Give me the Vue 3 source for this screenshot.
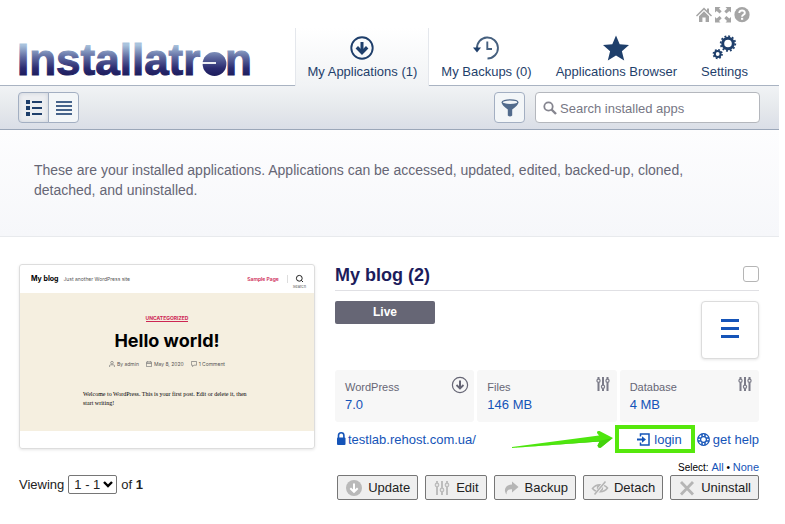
<template>
  <div class="page">
    <header class="header">
      <h1 class="logo" aria-label="Installatron">
        <svg width="248" height="56" viewBox="-6 0 248 56">
          <defs>
            <linearGradient id="ink" gradientUnits="userSpaceOnUse" x1="0" y1="12" x2="0" y2="43">
              <stop offset="0" stop-color="#a9c3dd" />
              <stop offset=".4" stop-color="#5e699f" />
              <stop offset=".75" stop-color="#2b2b70" />
              <stop offset="1" stop-color="#1c1c5c" />
            </linearGradient>
          </defs>
          <text x="-2" y="42">Installatr</text>
          <circle cx="195.500" cy="31" r="11.900" fill="url(#ink)" />
          <path d="M183 30h14" stroke="#fff" stroke-width="1.800" />
          <text x="206" y="42">n</text>
        </svg>
      </h1>

      <div class="header-right">
        <div class="top-links">
          <a href="#" aria-label="Home">
            <svg width="16" height="16" viewBox="0 0 16 16" fill="#a5a5a5">
              <path d="M8 0.500 11 3.500V1.500h2v4L16 8.600l-1 1L8 2.800 1 9.600 0 8.600z" />
              <path d="M8 4.300 13 9.200V15H9.600v-4.500H6.400V15H3V9.200z" />
            </svg>
          </a>
          <a href="#" aria-label="Fullscreen">
            <svg width="16" height="16" viewBox="0 0 16 16" fill="#a5a5a5">
              <path d="M0 0h5.500L4 1.700 6.700 4.300 4.600 6.500 1.700 4 0 5.500z" />
              <path d="M16 0v5.500L14.300 4l-2.900 2.500L9.300 4.300 12 1.700 10.500 0z" />
              <path d="M0 15.500V10l1.700 1.600 2.900-2.500L6.700 11.300 4 13.900l1.500 1.600z" />
              <path d="M16 15.500h-5.500L12 13.900 9.300 11.300l2.100-2.200 2.900 2.500L16 10z" />
            </svg>
          </a>
          <a href="#" aria-label="Help">
            <svg width="16" height="16" viewBox="0 0 16 16">
              <circle cx="8" cy="7.700" r="7.600" fill="#a5a5a5" />
              <path d="M5.300 5.900c0-3.400 5.600-3.300 5.500 0 0 1.900-2.700 1.900-2.700 3.800" fill="none" stroke="#fff" stroke-width="2" />
              <rect x="7" y="10.800" width="2.200" height="2" fill="#fff" />
            </svg>
          </a>
        </div>

        <nav class="tabs">
          <a v-for="tab in tabs" :key="tab.id" href="#" class="tab"
            :class="{ active: tab.id === activeTab }"
            @click.prevent="activeTab = tab.id">
            <svg v-if="tab.id === 'apps'" width="26" height="26" viewBox="0 0 26 26" fill="none" stroke="#1f3f6b">
              <circle cx="13" cy="13" r="10.700" stroke-width="1.900" />
              <path d="M13 7v10" stroke-width="3" />
              <path d="M7.800 12.300 13 17.500l5.200-5.200" stroke-width="3.400" />
            </svg>
            <svg v-if="tab.id === 'backups'" width="28" height="26" viewBox="0 0 28 26" fill="none" stroke="#46607f">
              <path d="M5 14A10.500 10.500 0 1 1 15.500 23.500" stroke-width="1.900" />
              <path d="M15.300 6.500V14H20" stroke-width="1.900" />
              <path d="M1 12.500h8L5 17.500z" fill="#1f3f6b" stroke="none" />
            </svg>
            <svg v-if="tab.id === 'browser'" width="28" height="26" viewBox="0 0 28 26">
              <path d="M14 0.500 17.700 9.300 27 10l-7.100 6.300L22.200 25.500 14 20.500 5.800 25.500 8.100 16.300 1 10l9.300-.7z" fill="#1f3f6b" />
            </svg>
            <svg v-if="tab.id === 'settings'" width="26" height="26" viewBox="0 0 26 26" fill="none" stroke="#1f3f6b">
              <circle cx="16" cy="8.500" r="5.300" stroke-width="3" />
              <circle cx="16" cy="8.500" r="7.300" stroke-width="1.800" stroke-dasharray="1.900 1.922" />
              <circle cx="5.700" cy="19" r="2.900" stroke-width="2" />
              <circle cx="5.700" cy="19" r="4.300" stroke-width="1.700" stroke-dasharray="1.700 1.677" />
            </svg>
            <span>{{ tab.label }}</span>
          </a>
        </nav>
      </div>
    </header>

    <div class="toolbar">
      <div class="view-switch">
        <button type="button" class="pressed" aria-label="Detailed list">
          <svg width="18" height="18" viewBox="0 0 18 18" fill="#1f3f6b">
            <path d="M1 1h4v4H1zM1 7h4v4H1zM1 13h4v4H1zM7 2h10v2H7zM7 8h10v2H7zM7 14h10v2H7z" />
          </svg>
        </button>
        <button type="button" aria-label="Compact list">
          <svg width="18" height="18" viewBox="0 0 18 18" fill="#46638a">
            <path d="M1 2h16v2H1zM1 6h16v2H1zM1 10h16v2H1zM1 14h16v2H1z" />
          </svg>
        </button>
      </div>

      <div class="search-group">
        <button type="button" class="filter" aria-label="Filter">
          <svg width="18" height="18" viewBox="0 0 18 18">
            <path d="M0.500 3.500Q1 6.500 6.800 10.500V16.500Q9 18.500 11.200 16.500V10.500Q17 6.500 17.500 3.500z" fill="#526b8c" />
            <ellipse cx="9" cy="3.200" rx="7.900" ry="2.300" fill="#f2f5f8" stroke="#526b8c" stroke-width="1.200" />
          </svg>
        </button>
        <label class="search">
          <svg width="14" height="14" viewBox="0 0 14 14" fill="none" stroke="#85858f">
            <circle cx="5.500" cy="5.500" r="4.200" stroke-width="1.800" />
            <path d="M8.500 8.500 13 13" stroke-width="2.400" />
          </svg>
          <input v-model="search" type="text" placeholder="Search installed apps" aria-label="Search installed apps" />
        </label>
      </div>
    </div>

    <p class="intro">
      These are your installed applications. Applications can be accessed, updated, edited, backed-up, cloned, detached, and uninstalled.
    </p>

    <main class="content">
      <div class="app">
        <!-- site preview -->
        <div class="preview">
          <div class="site-head">
            <b>My blog</b>
            <span class="tagline">Just another WordPress site</span>
            <span class="sample">Sample Page</span>
            <span class="site-search">
              <svg width="9" height="9" viewBox="0 0 9 9" fill="none" stroke="#222">
                <circle cx="4.300" cy="4.300" r="2.900" />
                <path d="M6.300 6.300 8 8" />
              </svg>
              Search
            </span>
          </div>
          <div class="site-body">
            <span class="category">UNCATEGORIZED</span>
            <h2>Hello world!</h2>
            <div class="meta">
              <span>
                <svg width="6" height="6" viewBox="0 0 6 6" fill="none" stroke="#777" stroke-width=".7">
                  <circle cx="3" cy="1.700" r="1.300" />
                  <path d="M.6 6V4.500Q.6 3.800 1.500 3.800h3Q5.400 3.800 5.400 4.500V6" />
                </svg>
                By admin
              </span>
              <span>
                <svg width="6" height="6" viewBox="0 0 6 6" fill="none" stroke="#777" stroke-width=".7">
                  <path d="M.4 1h5.200v4.600H.4zM.4 2.500h5.200M1.700 0v1.500M4.300 0v1.500" />
                </svg>
                May 8, 2020
              </span>
              <span>
                <svg width="6" height="6" viewBox="0 0 6 6" fill="none" stroke="#777" stroke-width=".7">
                  <path d="M.4.5h5.200v3.700H3L1.500 5.600V4.200H.4z" />
                </svg>
                1 Comment
              </span>
            </div>
            <p>Welcome to WordPress. This is your first post. Edit or delete it, then start writing!</p>
          </div>
        </div>

        <div class="details">
          <div class="title-row">
            <h2>My blog (2)</h2>
            <input v-model="selected" type="checkbox" aria-label="Select My blog (2)" />
          </div>

          <div class="status-row">
            <span class="badge">Live</span>
            <button type="button" class="menu" aria-label="Menu">
              <svg width="18" height="20" viewBox="0 0 18 20" fill="#1554b8">
                <path d="M0 1h18v3H0zM0 9h18v3H0zM0 17h18v3H0z" />
              </svg>
            </button>
          </div>

          <div class="stats">
            <div v-for="stat in stats" :key="stat.label" class="stat">
              <div>
                <div class="stat-label">{{ stat.label }}</div>
                <a href="#">{{ stat.value }}</a>
              </div>
              <svg v-if="stat.icon === 'down'" width="18" height="18" viewBox="0 0 18 18" fill="none" stroke="#666675">
                <circle cx="9" cy="9" r="7.600" stroke-width="1.200" />
                <path d="M9 4.500v8" stroke-width="2" />
                <path d="M5.500 9 9 12.500 12.500 9" stroke-width="1.800" />
              </svg>
              <svg v-else width="16" height="16" viewBox="0 0 16 16" fill="none" stroke="#7b7b88">
                <path d="M2.500 1v2M2.500 6.500V15M7 1v8M7 12.500V15M11.500 1v2M11.500 6.500V15" stroke-width="2" />
                <circle cx="2.500" cy="4.700" r="1.600" stroke-width="1.200" />
                <circle cx="7" cy="10.800" r="1.600" stroke-width="1.200" />
                <circle cx="11.500" cy="4.700" r="1.600" stroke-width="1.200" />
              </svg>
            </div>
          </div>

          <div class="links">
            <a href="#" class="site-link">
              <svg width="12" height="14" viewBox="0 0 12 14">
                <path d="M3.500 7V3.500a2.700 2.700 0 0 1 5.400 0V7" fill="none" stroke="#1554b8" stroke-width="1.600" />
                <rect x="2" y="5.500" width="8.500" height="7.500" rx="1" fill="#1554b8" />
              </svg>
              <span>testlab.rehost.com.ua/</span>
            </a>
            <svg class="arrow" width="102" height="20" viewBox="0 0 102 20">
              <path d="M1 18 88 6.500 86 4Q85.500 1.500 88.500 2L102 9 90 18.500Q87 19.500 86.500 16.500L88.500 12.500 1 19z" fill="#4ee60e" />
              <path d="M3 18.800 89 11.800 101 9.200 90 18.500Q87 19.500 86.500 16.500L88.500 12.500z" fill="#43d20c" />
            </svg>
            <a href="#" class="login">
              <svg width="13" height="13" viewBox="0 0 13 13" fill="none" stroke="#1554b8">
                <path d="M3.500 3.500V1H12v11H3.500V9.500" stroke-width="1.500" />
                <path d="M0 6.500h6" stroke-width="2" />
                <path d="M5 3.300 9 6.500 5 9.700z" fill="#1554b8" stroke="none" />
              </svg>
              <span>login</span>
            </a>
            <a href="#" class="help">
              <svg width="13" height="13" viewBox="0 0 13 13" fill="none" stroke="#1554b8">
                <circle cx="6.500" cy="6.500" r="5.800" stroke-width="1.200" />
                <circle cx="6.500" cy="6.500" r="2.900" stroke-width="1.200" />
                <path d="M5 .8v3M8 .8v3M5 9.200v3M8 9.200v3M.8 5h3M.8 8h3M9.200 5h3M9.200 8h3" stroke-width="1.500" />
              </svg>
              <span>get help</span>
            </a>
          </div>
        </div>
      </div>

      <div class="footer">
        <div class="paging">
          <label for="range">Viewing</label>
          <span class="range">
            <select id="range"><option>1 - 1</option></select>
            <svg width="10" height="7" viewBox="0 0 10 7" fill="none" stroke="#000" stroke-width="2.400">
              <path d="M1 1 5 5 9 1" />
            </svg>
          </span>
          <span>of <b>1</b></span>
        </div>

        <div class="bulk">
          <div class="select-links">Select: <a href="#" @click.prevent="selected = true">All</a> • <a href="#" @click.prevent="selected = false">None</a></div>
          <div class="actions">
            <button type="button">
              <svg width="18" height="18" viewBox="0 0 18 18">
                <circle cx="9" cy="9" r="8" fill="#b9b9b9" />
                <path d="M9 4.500v8M5.300 9.200 9 12.800l3.700-3.600" fill="none" stroke="#fff" stroke-width="2" />
              </svg>
              Update
            </button>
            <button type="button">
              <svg width="18" height="18" viewBox="0 0 18 18" fill="none" stroke="#bdbdbd">
                <path d="M4 2v2M4 8v8M9 2v7M9 13v3M14 2v2M14 8v8" stroke-width="2" />
                <circle cx="4" cy="6" r="1.700" stroke-width="1.400" />
                <circle cx="9" cy="11" r="1.700" stroke-width="1.400" />
                <circle cx="14" cy="6" r="1.700" stroke-width="1.400" />
              </svg>
              Edit
            </button>
            <button type="button">
              <svg width="18" height="18" viewBox="0 0 18 18" fill="#b5b5b5">
                <path d="M10 2.500 16.500 8l-6.500 5.500V10.300C6.500 10 4.500 11.500 4.500 15.500 1 11 3.500 5.500 10 5.500z" />
              </svg>
              Backup
            </button>
            <button type="button">
              <svg width="18" height="18" viewBox="0 0 18 18" fill="none" stroke="#b5b5b5" stroke-width="1.600">
                <path d="M1.500 9.500C5 4.500 13 4.500 16.500 9 13 14 5 14 1.500 9.500z" />
                <circle cx="9" cy="9" r="2.400" />
                <path d="M4 16 14 2.500" stroke="#efefef" stroke-width="3" />
                <path d="M3.500 15.500 14.500 2.500" />
              </svg>
              Detach
            </button>
            <button type="button">
              <svg width="18" height="18" viewBox="0 0 18 18" fill="none" stroke="#b5b5b5" stroke-width="2.800">
                <path d="M3 3 15 15.500M15 3 3 15.500" />
              </svg>
              Uninstall
            </button>
          </div>
        </div>
      </div>
    </main>
  </div>
</template>

<script setup>
  import { ref } from 'vue';

  const activeTab = ref('apps')
  const search = ref('')
  const selected = ref(false)

  const tabs = [
    { id: 'apps', label: 'My Applications (1)' },
    { id: 'backups', label: 'My Backups (0)' },
    { id: 'browser', label: 'Applications Browser' },
    { id: 'settings', label: 'Settings' }
  ]

  const stats = [
    { label: 'WordPress', value: '7.0', icon: 'down' },
    { label: 'Files', value: '146 MB', icon: 'sliders' },
    { label: 'Database', value: '4 MB', icon: 'sliders' }
  ]
</script>

<style>
body {
    background: #fff;
}
</style>

<style scoped>
.page {
    margin-right: 6px;
    font-family: "Liberation Sans", Arial, sans-serif;
    font-size: 13px;
    line-height: 16px;
    color: #222;
}

.page * {
    box-sizing: border-box;
}

a {
    color: #1554b8;
    text-decoration: none;
}

svg {
    display: block;
    flex: none;
}

button,
input,
select {
    font: inherit;
}

h1,
h2,
p {
    margin: 0;
}

/* header */
.header {
    display: flex;
    justify-content: space-between;
    align-items: flex-end;
    padding: 0 19px 0 13px;
    border-bottom: 1px solid #a9b3c2;
}

.logo {
    margin-bottom: -4px;
}

.logo text {
    font-size: 44px;
    font-weight: bold;
    fill: url(#ink);
    stroke: url(#ink);
    stroke-width: 1px;
}

.top-links {
    display: flex;
    justify-content: flex-end;
    gap: 3px;
    padding: 7px 10px 5px 0;
}

.tabs {
    display: flex;
}

.tab {
    display: flex;
    flex-direction: column;
    align-items: center;
    gap: 3px;
    height: 57px;
    padding: 7px 12px 0;
    color: #1f3f6b;
}

.tab.active {
    height: 58px;
    margin-bottom: -1px;
    padding: 7px 11px 0;
    border: solid #e4e7ec;
    border-width: 0 1px;
    background: linear-gradient(#fff, #f1f3f5);
}

/* toolbar */
.toolbar {
    display: flex;
    justify-content: space-between;
    padding: 6px 19px;
    background: linear-gradient(#f1f3f5, #e5e8ec 55%, #dadee7);
    border-bottom: 1px solid #9ba7b9;
}

.view-switch {
    display: flex;
    margin-left: -1px;
}

.toolbar button {
    display: flex;
    align-items: center;
    justify-content: center;
    width: 31px;
    height: 31px;
    padding: 0;
    border: 1px solid #a3afc2;
    border-radius: 4px;
    background: #f3f6f8;
}

.view-switch button:first-child {
    border-radius: 4px 0 0 4px;
}

.view-switch button:last-child {
    margin-left: -1px;
    border-radius: 0 4px 4px 0;
}

.toolbar .pressed {
    background: #eceef1;
    box-shadow: inset 0 0 4px #ccd1da;
}

.search-group {
    display: flex;
    gap: 10px;
}

.search {
    display: flex;
    align-items: center;
    gap: 3px;
    width: 225px;
    height: 31px;
    padding: 0 7px;
    border: 1px solid #b4b7bd;
    border-radius: 4px;
    background: #fff;
}

.search input {
    flex: 1;
    min-width: 0;
    padding: 2px 0 0;
    border: 0;
    outline: 0;
    background: none;
}

.search input::placeholder {
    color: #777785;
}

.intro {
    padding: 30px 80px 36px 34px;
    background: linear-gradient(#fdfdfe, #f6f7fa);
    border-bottom: 1px solid #e8eaed;
    font-size: 14px;
    line-height: 20px;
    color: #666675;
}

/* application */
.content {
    padding: 27px 20px 0 19px;
}

.app {
    display: grid;
    grid-template-columns: 296px 1fr;
    gap: 20px;
    align-items: start;
}

.preview {
    padding-bottom: 17px;
    border: 1px solid #ddd;
    border-radius: 3px;
    box-shadow: 0 1px 3px #e6e6e6;
    font-family: Inter, sans-serif;
    font-size: 5px;
    line-height: 8px;
    color: #555;
}

.site-head {
    display: flex;
    align-items: center;
    height: 28px;
    padding: 0 8px 0 11px;
}

.site-head b {
    font-size: 7px;
    color: #000;
}

.tagline {
    margin-left: 5px;
}

.sample {
    margin-left: auto;
    padding-right: 8px;
    border-right: 1px solid #ddd;
    font-weight: 600;
    color: #cd2653;
}

.site-search {
    display: flex;
    flex-direction: column;
    align-items: center;
    margin-left: 5px;
    padding-top: 5px;
    font-size: 4px;
    line-height: 4px;
    gap: 2px;
}

.site-body {
    display: flex;
    flex-direction: column;
    align-items: center;
    height: 138px;
    padding-top: 22px;
    background: #f5efe0;
}

.category {
    border-bottom: 1px solid #cd2653;
    font-weight: 700;
    line-height: 6px;
    color: #cd2653;
}

.site-body h2 {
    margin-top: 7px;
    font-size: 18px;
    line-height: 24px;
    color: #000;
}

.meta {
    display: flex;
    gap: 7px;
    margin-top: 7px;
}

.meta span {
    display: flex;
    align-items: center;
    gap: 2px;
}

.site-body p {
    width: 168px;
    margin-top: 22px;
    font-family: "Liberation Serif", serif;
    font-size: 6px;
    line-height: 9px;
    color: #000;
}

.title-row {
    display: flex;
    justify-content: space-between;
    align-items: flex-start;
    height: 27px;
    border-bottom: 1px solid #e0e0e4;
}

.title-row h2 {
    font-size: 18px;
    line-height: 22px;
    color: #1c1c5c;
}

.title-row input {
    appearance: none;
    width: 16px;
    height: 16px;
    margin: 2px 0 0;
    border: 1px solid #b5b5b5;
    border-radius: 3px;
    background: #fff;
}

.title-row input:checked {
    background: #1554b8;
}

.status-row {
    display: flex;
    justify-content: space-between;
    align-items: flex-start;
    margin-top: 10px;
}

.badge {
    width: 100px;
    border-radius: 2px;
    background: #666675;
    color: #fff;
    font-size: 12px;
    font-weight: bold;
    line-height: 23px;
    text-align: center;
}

.menu {
    display: flex;
    align-items: center;
    justify-content: center;
    width: 58px;
    height: 58px;
    padding: 0 0 4px;
    border: 1px solid #dcdcdc;
    border-radius: 4px;
    background: #fff;
    box-shadow: 0 1px 3px #e6e6e6;
}

.stats {
    display: grid;
    grid-template-columns: repeat(3, 1fr);
    gap: 3px;
    margin-top: 11px;
}

.stat {
    display: flex;
    justify-content: space-between;
    align-items: flex-start;
    height: 52px;
    padding: 6px 5px 0 10px;
    border-radius: 3px;
    background: #f7f7f7;
}

.stat > div {
    padding-top: 3px;
    line-height: 18px;
}

.stat-label {
    font-size: 11px;
    line-height: 17px;
    color: #666675;
}

.links {
    display: flex;
    align-items: center;
    height: 28px;
    margin-top: 3px;
}

.links a {
    display: flex;
    align-items: center;
}

.links span {
    padding-top: 2px;
}

.site-link {
    gap: 1px;
}

.arrow {
    margin: 0 2px 0 auto;
}

.login {
    justify-content: flex-end;
    gap: 4px;
    width: 80px;
    height: 28px;
    padding-right: 9px;
    border: 4px solid #56e80c;
}

.help {
    gap: 3px;
    margin-left: 2px;
}

/* footer */
.footer {
    display: flex;
    justify-content: space-between;
    margin-top: 7px;
}

.paging {
    display: flex;
    align-items: center;
    gap: 4px;
    height: 19px;
    margin-top: 15px;
}

.range {
    position: relative;
}

.range select {
    display: block;
    appearance: none;
    width: 49px;
    height: 19px;
    padding: 0 5px;
    border: 1px solid #767676;
    border-radius: 2px;
    background: #fff;
    line-height: 17px;
    color: #222;
}

.range svg {
    position: absolute;
    right: 4px;
    top: 6px;
    pointer-events: none;
}

.select-links {
    font-size: 10px;
    line-height: 15px;
    text-align: right;
    color: #000;
}

.select-links a {
    font-size: 11px;
}

.actions {
    display: flex;
    gap: 7px;
}

.actions button {
    display: flex;
    align-items: center;
    gap: 5px;
    height: 25px;
    padding: 0 7px;
    border: 1px solid #767676;
    border-radius: 2px;
    background: #efefef;
    color: #222;
}
</style>
